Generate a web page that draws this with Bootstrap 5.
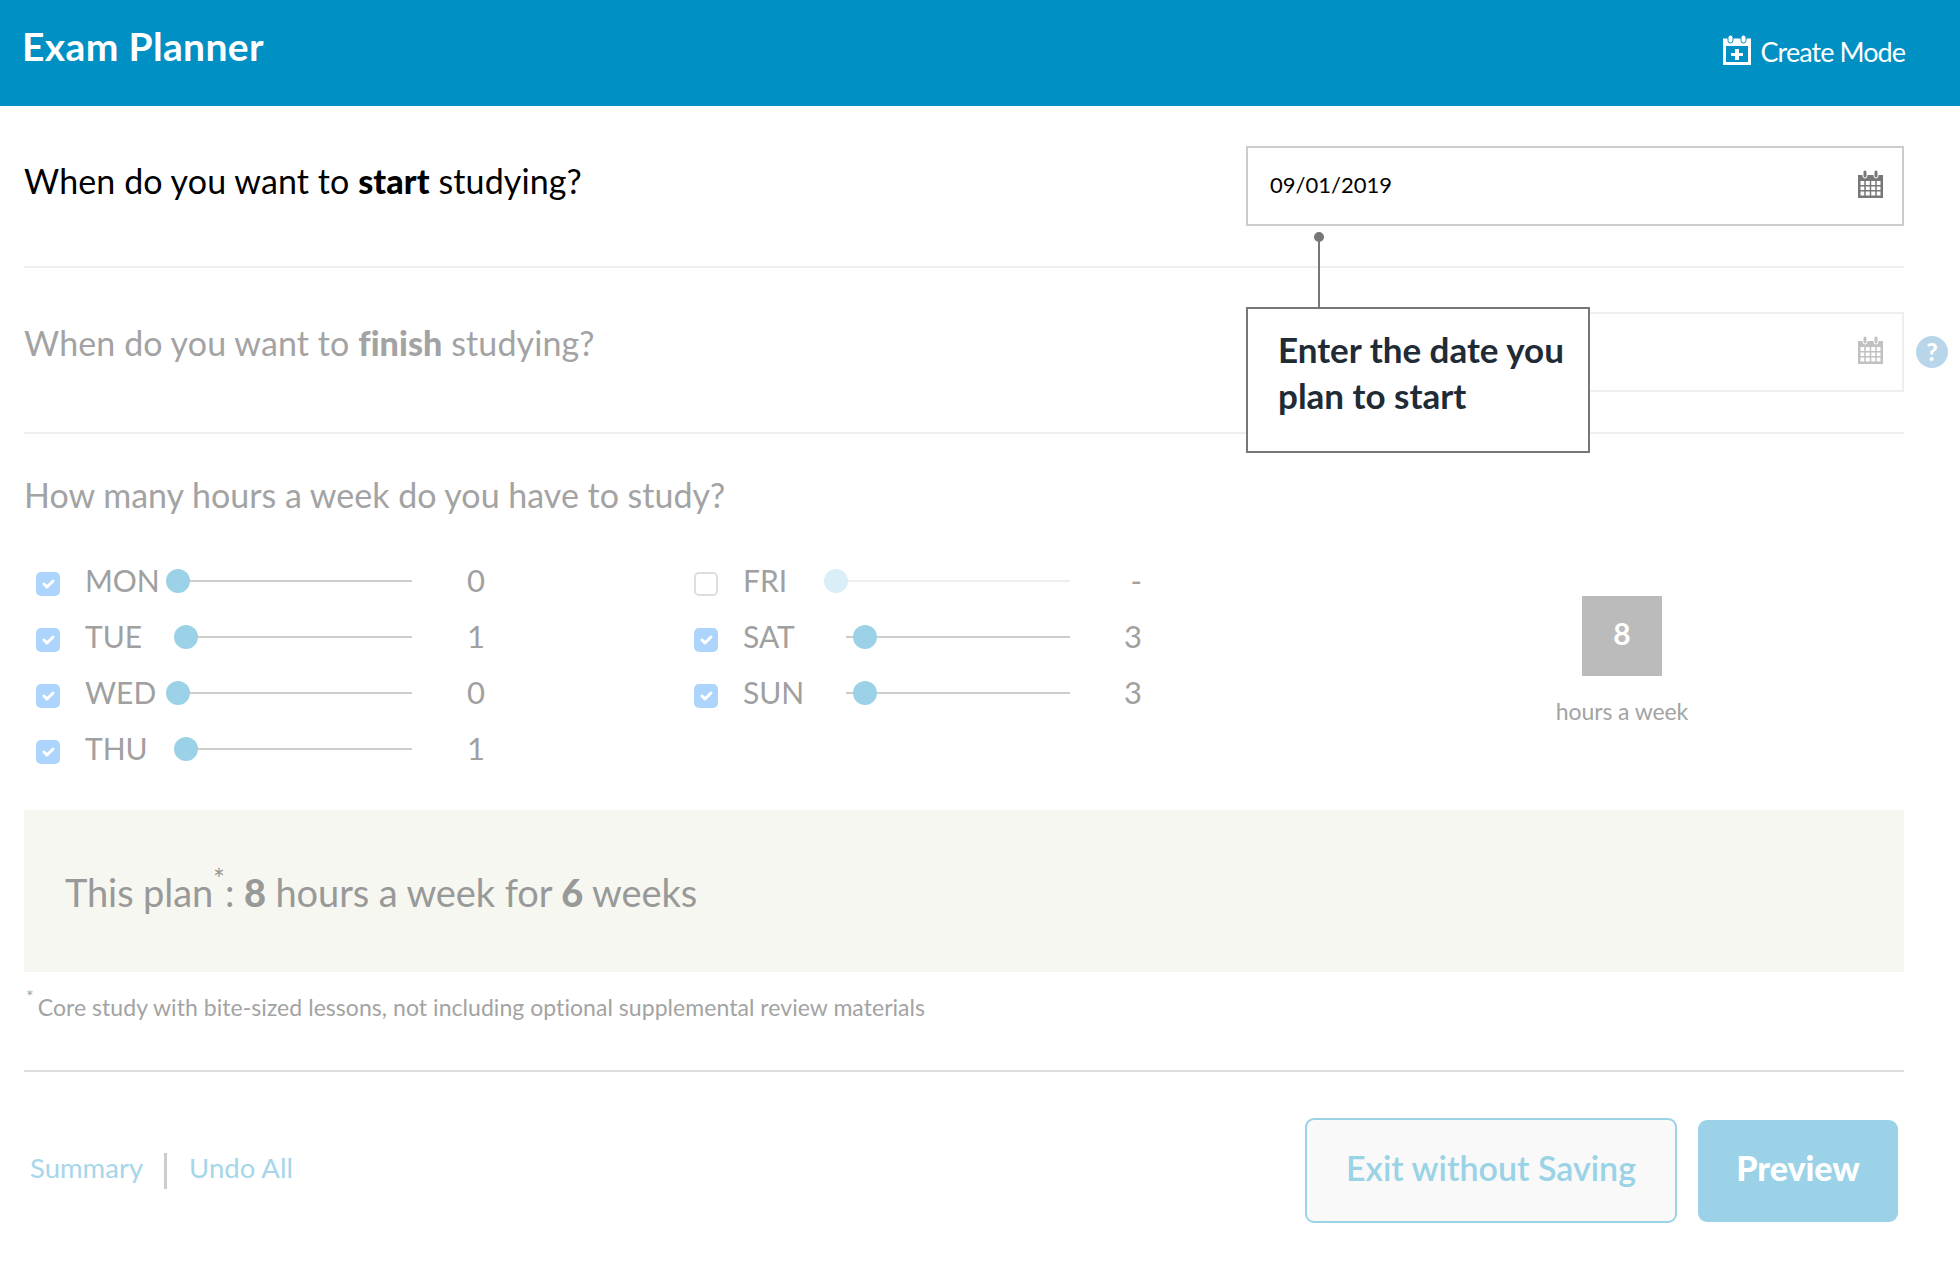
<!DOCTYPE html>
<html lang="en">
<head>
<meta charset="UTF-8">
<title>Exam Planner</title>
<link href="https://cdn.jsdelivr.net/npm/bootstrap@5.3.0/dist/css/bootstrap.min.css" rel="stylesheet">
<style>
    body { background: #fff; font-family: "Lato", "Noto Sans", sans-serif; color: #000; }
    .top-bar { background: #0090c4; height: 106px; padding: 0 55px 0 22px; align-items: flex-start; }
    .top-title { color: #fff; font-size: 39px; font-weight: 700; line-height: 46px; margin-top: 23px; letter-spacing: .35px; }
    .top-mode { color: #fff; font-size: 27px; line-height: 34px; margin-top: 35px; letter-spacing: -.95px; text-decoration: none; gap: 10px; }
    .top-mode svg { margin-top: -5px; }
    .page-wrap { padding: 0 56px 0 24px; }
    .ask-row { border-bottom: 2px solid #eee; }
    .ask-first { padding: 40px 0 40px; }
    .ask-second { padding: 44px 0 40px; }
    .ask-text { font-size: 34px; line-height: 44px; margin: 0; letter-spacing: .1px; }
    .ask-first .ask-text { margin-top: 13px; }
    .ask-second .ask-text { margin-top: 9px; }
    .ask-text, .ask-text b { font-weight: 400; }
    .ask-text b { font-weight: 900; }
    .dim-text { color: #a3a3a3; }
    .date-box { width: 658px; height: 80px; }
    .date-box .form-control { height: 80px; border: 2px solid #ccc; border-radius: 0; padding: 0 22px 3px; font-size: 22px; color: #000; box-shadow: none; }
    .date-off .form-control { border-color: #eee; }
    .date-icon { position: absolute; right: 21px; top: 24px; }
    .date-off .date-icon { opacity: .45; }
    .help-dot { position: absolute; left: 670px; top: 24px; width: 32px; height: 32px; border-radius: 50%; background: #b8d5ea; color: #fff; font-weight: 900; font-size: 24px; line-height: 32px; text-align: center; }
    .tip-box { position: absolute; left: 1246px; top: 307px; width: 344px; height: 146px; background: #fff; border: 2px solid #777; padding: 17px 10px 17px 30px; font-size: 35px; line-height: 46px; font-weight: 700; color: #212b36; z-index: 5; }
    .tip-line { position: absolute; left: 70px; top: -72px; width: 2px; height: 72px; background: #777; }
    .tip-pin { position: absolute; left: -4px; top: -5px; width: 10px; height: 10px; border-radius: 50%; background: #777; }
    .hours-ask { padding-top: 39px; margin: 0; font-size: 34px; line-height: 44px; color: #a3a3a3; }
    .days-area { padding: 35px 0 33px 12px; height: 293px; }
    .day-col-one { width: 658px; }
    .day-col-two { width: 448px; }
    .day-line { height: 56px; }
    .day-line .form-check-input { width: 24px; height: 24px; margin: 8px 25px 0 0; flex: none; border-radius: 5px; border: 2px solid #ddd; box-shadow: none; opacity: 1; }
    .day-line .form-check-input:checked { background-color: #add4fc; border-color: #add4fc; }
    .day-name { width: 81px; font-size: 30px; color: #a0a0a0; flex: none; }
    .day-slide { position: relative; width: 246px; height: 24px; margin-top: 2px; flex: none; display: flex; align-items: center; }
    .day-track { height: 2px; background: #ccc; margin-left: 22px; flex: 1; }
    .day-knob { position: absolute; top: 0; width: 24px; height: 24px; border-radius: 50%; background: #9bd2e7; }
    .day-num { width: 73px; text-align: right; font-size: 31px; color: #a0a0a0; }
    .day-off .day-track { background: #eee; }
    .day-off .day-knob { background: #d9eef6; }
    .total-col { width: 200px; margin-left: 380px; padding-top: 8px; margin-top: 36px; text-align: center; }
    .total-box { width: 80px; height: 80px; background: #bbb; color: #fff; font-size: 30px; font-weight: 700; margin: 0 auto; line-height: 74px; }
    .total-note { margin-top: 20px; font-size: 23px; line-height: 30px; color: #a3a3a3; letter-spacing: -.1px; }
    .plan-band { background: #f6f7f0; height: 162px; padding: 3px 0 0 41px; font-size: 38px; color: #999; letter-spacing: -.1px; align-items: center; }
    .plan-band sup { font-size: 28px; top: -.6em; }
    .plan-band b { font-weight: 900; }
    .foot-note { margin: 20px 0 0; font-size: 23px; line-height: 30px; color: #a3a3a3; letter-spacing: .05px; }
    .foot-note sup { font-size: 18px; top: -.7em; margin: 0 4px 0 2px; }
    .end-rule { margin: 48px 0 0; border: 0; border-top: 2px solid #ddd; opacity: 1; }
    .end-row { padding: 46px 6px 0 6px; }
    .end-links a { color: #a5d6e9; font-size: 27.5px; text-decoration: none; padding-bottom: 5px; }
    .end-sep { width: 3px; height: 36px; background: #ccc; margin: 0 22px 0 21px; }
    .btn-exit, .btn-preview { font-size: 34px; border-radius: 9px; padding-bottom: 13px; }
    .btn-exit { width: 372px; height: 105px; color: #9ad2e6; background: #f9f9f9; border: 2px solid #9ad2e6; font-weight: 600; margin-right: 21px; }
    .btn-preview { width: 200px; height: 102px; color: #fff; background: #9bd2e7; border: 0; font-weight: 900; }
</style>
</head>
<body>

<nav class="navbar top-bar justify-content-between">
    <div class="top-title">Exam Planner</div>
    <a class="top-mode d-flex align-items-center" href="#">
        <svg width="28" height="30" viewBox="0 0 28 30"><path d="M1.5 5h25v23.500h-25z" fill="none" stroke="#fff" stroke-width="3"/><path d="M1 4h26v7H1z" fill="#fff"/><rect x="5" y="0" width="5" height="8" rx="2.500" fill="#fff" stroke="#0090c4"/><rect x="18" y="0" width="5" height="8" rx="2.500" fill="#fff" stroke="#0090c4"/><path d="M12 14h4v4h4v3h-4v4h-4v-4H8v-3h4z" fill="#fff"/></svg>
        Create Mode
    </a>
</nav>

<div class="page-wrap">
    <div class="ask-row ask-first d-flex justify-content-between align-items-start">
        <p class="ask-text">When do you want to <b>start</b> studying?</p>
        <div class="date-box position-relative">
            <input type="text" class="form-control" value="09/01/2019">
            <svg class="date-icon" width="25" height="28" viewBox="0 0 25 28"><path d="M0 5h25v23H0z" fill="#777"/><rect x="5" y="0" width="4" height="8" rx="2" fill="#777" stroke="#fff"/><rect x="16" y="0" width="4" height="8" rx="2" fill="#777" stroke="#fff"/><path d="M2.500 11h20v14.500h-20z" fill="#fff"/><path d="M7 11v15M12.500 11v15M18 11v15M2 15.800h21M2 20.700h21" stroke="#777" stroke-width="1.500"/></svg>
        </div>
    </div>

    <div class="ask-row ask-second d-flex justify-content-between align-items-start">
        <p class="ask-text dim-text">When do you want to <b>finish</b> studying?</p>
        <div class="date-box date-off position-relative">
            <input type="text" class="form-control" value="">
            <svg class="date-icon" width="25" height="28" viewBox="0 0 25 28"><path d="M0 5h25v23H0z" fill="#777"/><rect x="5" y="0" width="4" height="8" rx="2" fill="#777" stroke="#fff"/><rect x="16" y="0" width="4" height="8" rx="2" fill="#777" stroke="#fff"/><path d="M2.500 11h20v14.500h-20z" fill="#fff"/><path d="M7 11v15M12.500 11v15M18 11v15M2 15.800h21M2 20.700h21" stroke="#777" stroke-width="1.500"/></svg>
            <span class="help-dot">?</span>
        </div>
    </div>

    <p class="hours-ask">How many hours a week do you have to study?</p>

    <div class="days-area d-flex">
        <div class="day-col-one">
            <div class="day-line d-flex align-items-center"><input class="form-check-input" type="checkbox" checked><span class="day-name">MON</span><div class="day-slide"><div class="day-track"></div><span class="day-knob" style="left:0px"></span></div><span class="day-num">0</span></div>
            <div class="day-line d-flex align-items-center"><input class="form-check-input" type="checkbox" checked><span class="day-name">TUE</span><div class="day-slide"><div class="day-track"></div><span class="day-knob" style="left:8px"></span></div><span class="day-num">1</span></div>
            <div class="day-line d-flex align-items-center"><input class="form-check-input" type="checkbox" checked><span class="day-name">WED</span><div class="day-slide"><div class="day-track"></div><span class="day-knob" style="left:0px"></span></div><span class="day-num">0</span></div>
            <div class="day-line d-flex align-items-center"><input class="form-check-input" type="checkbox" checked><span class="day-name">THU</span><div class="day-slide"><div class="day-track"></div><span class="day-knob" style="left:8px"></span></div><span class="day-num">1</span></div>
        </div>
        <div class="day-col-two">
            <div class="day-line day-off d-flex align-items-center"><input class="form-check-input" type="checkbox"><span class="day-name">FRI</span><div class="day-slide"><div class="day-track"></div><span class="day-knob" style="left:0px"></span></div><span class="day-num">-</span></div>
            <div class="day-line d-flex align-items-center"><input class="form-check-input" type="checkbox" checked><span class="day-name">SAT</span><div class="day-slide"><div class="day-track"></div><span class="day-knob" style="left:29px"></span></div><span class="day-num">3</span></div>
            <div class="day-line d-flex align-items-center"><input class="form-check-input" type="checkbox" checked><span class="day-name">SUN</span><div class="day-slide"><div class="day-track"></div><span class="day-knob" style="left:29px"></span></div><span class="day-num">3</span></div>
        </div>
        <div class="total-col">
            <div class="total-box">8</div>
            <div class="total-note">hours a week</div>
        </div>
    </div>

    <div class="plan-band d-flex">
        <div>This plan<sup>*</sup>: <b>8</b> hours a week for <b>6</b> weeks</div>
    </div>
    <p class="foot-note"><sup>*</sup>Core study with bite-sized lessons, not including optional supplemental review materials</p>
    <hr class="end-rule">

    <div class="end-row d-flex justify-content-between align-items-center">
        <div class="end-links d-flex align-items-center">
            <a href="#">Summary</a>
            <span class="end-sep"></span>
            <a href="#">Undo All</a>
        </div>
        <div class="d-flex align-items-center">
            <button type="button" class="btn btn-exit">Exit without Saving</button>
            <button type="button" class="btn btn-preview">Preview</button>
        </div>
    </div>
</div>

<div class="tip-box">
    <span class="tip-line"><span class="tip-pin"></span></span>
    Enter the date you<br>plan to start
</div>

<script src="https://cdn.jsdelivr.net/npm/bootstrap@5.3.0/dist/js/bootstrap.bundle.min.js"></script>
</body>
</html>
